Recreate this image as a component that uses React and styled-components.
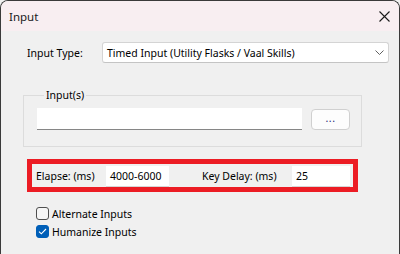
import React from 'react';
import styled, { createGlobalStyle } from 'styled-components';

const GlobalStyle = createGlobalStyle`
  html, body {
    margin: 0;
    padding: 0;
    background: #f0f0f0;
  }
  body {
    font-family: "Noto Sans", "Segoe UI", sans-serif;
    font-size: 10.5px;
    color: #000;
  }
  * {
    box-sizing: border-box;
  }
`;

const Window = styled.div`
  width: 400px;
  height: 254px;
  display: flex;
  flex-direction: column;
  background: #f0f0f0;
  border: 1px solid #3a3a3a;
  border-bottom: none;
  border-radius: 8px 8px 0 0;
  overflow: hidden;
`;

const TitleBar = styled.div`
  height: 30px;
  flex: none;
  display: flex;
  align-items: center;
  justify-content: space-between;
  padding: 0 9px 0 8px;
  background: #f8eef1;
`;

const Title = styled.span`
  font-size: 11.5px;
  color: #1a1a1a;
`;

const Body = styled.div`
  flex: 1;
  display: flex;
  flex-direction: column;
  padding: 11px 10px 0 22px;
`;

const TypeRow = styled.div`
  display: flex;
  align-items: center;
  padding-left: 4px;
`;

const Label = styled.span`
  flex: none;
  width: ${p => p.$w}px;
  white-space: nowrap;
`;

const Select = styled.div`
  flex: 1;
  height: 21px;
  display: flex;
  align-items: center;
  justify-content: space-between;
  padding: 0 4px 0 4px;
  background: #fff;
  border: 1px solid #d4d4d4;
  border-bottom-color: #c4c4c4;
  border-radius: 3px;
  white-space: nowrap;
`;

const GroupBox = styled.fieldset`
  margin: 24px 27px 0 0;
  padding: 5px 11px 16px 13px;
  border: 1px solid #dcdcdc;
  display: flex;
  align-items: center;
  gap: 9px;
`;

const GroupLegend = styled.legend`
  margin-left: 7px;
  padding: 0 2px;
  line-height: 16px;
`;

const TextField = styled.div`
  height: ${p => p.$h || 22}px;
  width: ${p => (p.$w ? `${p.$w}px` : 'auto')};
  flex: ${p => (p.$w ? 'none' : 1)};
  display: flex;
  align-items: center;
  padding-left: 4px;
  background: #fff;
  border-bottom: 1px solid ${p => p.$line || '#868686'};
`;

const Button = styled.div`
  width: 39px;
  height: 21px;
  display: flex;
  align-items: center;
  justify-content: center;
  padding-bottom: 2px;
  background: #fdfdfd;
  border: 1px solid #d0d0d0;
  border-radius: 4px;
  color: #2a2a7a;
  letter-spacing: 0.5px;
`;

const Highlight = styled.div`
  margin: 12px 0 0 4px;
  width: 331px;
  height: 33px;
  border: 5px solid #ec1c24;
  display: flex;
  align-items: flex-end;
  padding-left: 4px;
`;

const FieldLabel = styled(Label)`
  align-self: center;
  margin-top: 1px;
`;

const Spacer = styled.div`
  width: ${p => p.$w}px;
  flex: none;
`;

const Checks = styled.div`
  display: flex;
  flex-direction: column;
  gap: 5px;
  margin: 15px 0 0 13px;
`;

const CheckRow = styled.label`
  display: flex;
  align-items: center;
  gap: 3px;
  height: 13px;
`;

const Box = styled.span`
  width: 13px;
  height: 13px;
  display: flex;
  align-items: center;
  justify-content: center;
  border-radius: 3px;
  background: ${p => (p.$on ? '#005fb8' : '#f6f6f6')};
  border: 1px solid ${p => (p.$on ? '#005fb8' : '#4f4f4f')};
`;

const CloseIcon = () => (
  <svg width="11" height="11" viewBox="0 0 11 11">
    <path d="M0.5 0.5 L10.5 10.5 M10.5 0.5 L0.5 10.5" stroke="#1a1a1a" strokeWidth="1.1" fill="none" />
  </svg>
);

const Chevron = () => (
  <svg width="9" height="5" viewBox="0 0 9 5">
    <path d="M0.5 0.5 L4.5 4.5 L8.5 0.5" stroke="#606060" strokeWidth="1" fill="none" />
  </svg>
);

const Check = () => (
  <svg width="9" height="7" viewBox="0 0 9 7">
    <path d="M1 3.6 L3.3 5.8 L8 1" stroke="#fff" strokeWidth="1.1" fill="none" />
  </svg>
);

const App = () => (
  <>
    <GlobalStyle />
    <Window>
      <TitleBar>
        <Title>Input</Title>
        <CloseIcon />
      </TitleBar>
      <Body>
        <TypeRow>
          <Label $w={75}>Input Type:</Label>
          <Select>
            <span>Timed Input (Utility Flasks / Vaal Skills)</span>
            <Chevron />
          </Select>
        </TypeRow>

        <GroupBox>
          <GroupLegend>Input(s)</GroupLegend>
          <TextField />
          <Button>...</Button>
        </GroupBox>

        <Highlight>
          <FieldLabel $w={70}>Elapse: (ms)</FieldLabel>
          <TextField $w={63} $h={21} $line="#d6d6d6">4000-6000</TextField>
          <Spacer $w={33} />
          <FieldLabel $w={90}>Key Delay: (ms)</FieldLabel>
          <TextField $w={58} $h={21} $line="#d6d6d6">25</TextField>
        </Highlight>

        <Checks>
          <CheckRow>
            <Box />
            <span>Alternate Inputs</span>
          </CheckRow>
          <CheckRow>
            <Box $on>
              <Check />
            </Box>
            <span>Humanize Inputs</span>
          </CheckRow>
        </Checks>
      </Body>
    </Window>
  </>
);

export default App;
